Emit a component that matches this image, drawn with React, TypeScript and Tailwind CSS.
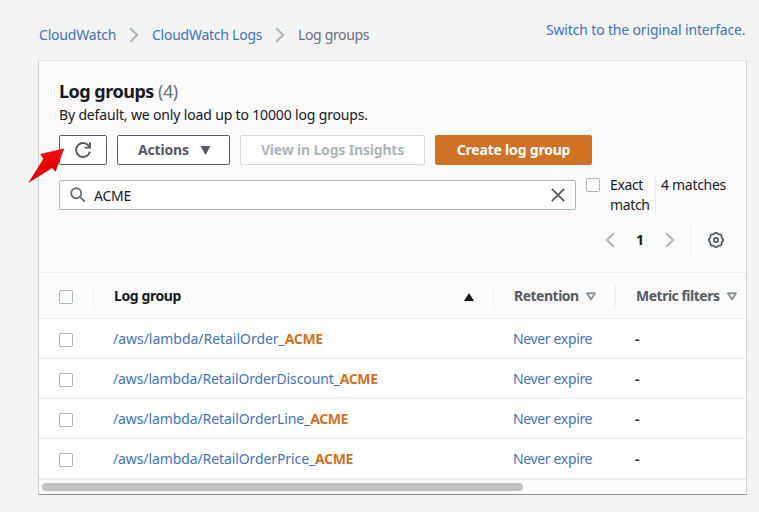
import React from "react";

const rows = [
  { name: "/aws/lambda/RetailOrder_", tracking: "tracking-[-0.03px]" },
  { name: "/aws/lambda/RetailOrderDiscount_", tracking: "tracking-[-0.12px]" },
  { name: "/aws/lambda/RetailOrderLine_", tracking: "tracking-[-0.1px]" },
  { name: "/aws/lambda/RetailOrderPrice_", tracking: "tracking-[-0.1px]" },
];

function Checkbox({ className = "" }: { className?: string }) {
  return <span className={"block h-[14px] w-[14px] shrink-0 rounded-[2px] border border-[#aab7b8] bg-white " + className} />;
}

function Chevron({ left = false }: { left?: boolean }) {
  return (
    <svg width="10" height="16" viewBox="0 0 10 16" fill="none" stroke="#aab7b8" strokeWidth="2" className="shrink-0">
      <path d={left ? "M8.7 1.2 1.9 8l6.8 6.8" : "M1.3 1.2 8.1 8l-6.8 6.8"} />
    </svg>
  );
}

function SortIcon() {
  return (
    <svg width="10" height="9" viewBox="0 0 10 9" fill="none" stroke="#879596" strokeWidth="1.9" strokeLinejoin="round" className="mt-px shrink-0">
      <path d="M1 1.2h8L5 7.6z" />
    </svg>
  );
}

// Scalloped outline with eight lobes, the first one at the top
const gearOutline = Array.from({ length: 96 }, (_, i) => {
  const angle = (i / 96) * Math.PI * 2;
  const radius = 6.75 + 0.5 * Math.cos(8 * angle);
  return `${(8 + radius * Math.sin(angle)).toFixed(2)},${(8 - radius * Math.cos(angle)).toFixed(2)}`;
}).join(" ");

export default function App() {
  return (
    <div className="h-[512px] w-[759px] overflow-hidden bg-[#f2f3f3] font-['Noto_Sans',sans-serif] text-[14px] leading-5 tracking-[-0.25px] whitespace-nowrap text-[#16191f]">
      <header className="flex h-[60px] pl-[39px] text-[#4174bd]">
        <nav className="mt-[25px] flex h-5 items-center">
          <a className="w-[90px] tracking-[-0.2px]">CloudWatch</a>
          <Chevron />
          <a className="ml-[13px] w-[123px]">CloudWatch Logs</a>
          <Chevron />
          <span className="ml-[13px] w-[80px] tracking-[-0.35px] text-[#687078]">Log groups</span>
        </nav>
        <a className="mt-5 ml-[168px] tracking-[-0.16px]">Switch to the original interface.</a>
      </header>

      <main className="flex ml-[38px] h-[435px] w-[709px] flex-col border border-t-[#e4e7e7] border-r-[#c9cfcf] border-b-[#8d9094] border-l-[#c9cfcf] bg-[#fafafa]">
        <section className="h-[211px] pl-5">
          <h1 className="mt-[18px] h-6 text-[18px] leading-6 font-bold tracking-[-0.5px]">
            Log groups <span className="font-normal text-[#687078]">(4)</span>
          </h1>
          <p className="mt-[2px] tracking-[-0.155px]">By default, we only load up to 10000 log groups.</p>
          <div className="mt-[10px] flex h-[30px] gap-[10px] font-bold tracking-[-0.17px] text-[#545b64]">
            <button className="flex w-12 items-center justify-center rounded-[2px] border border-[#545b64] bg-white">
              <svg width="18" height="18" viewBox="0 0 18 18" fill="none" stroke="#545b64" strokeWidth="1.9">
                <path d="M15.9 10.6A7 7 0 1 1 15.2 5.6" />
                <path d="M16 1.2v5.4h-5.3" />
              </svg>
            </button>
            <button className="flex w-[113px] items-center rounded-[2px] border border-[#545b64] bg-white pl-5">
              <span className="w-[62px] text-left">Actions</span>
              <svg width="11" height="9" viewBox="0 0 11 9" fill="#545b64"><path d="M.5 0h10L5.5 9z" /></svg>
            </button>
            <button className="w-[185px] rounded-[2px] border border-[#d5dbdb] bg-white text-[#aab7b8]">View in Logs Insights</button>
            <button className="w-[157px] rounded-[2px] bg-[#d17126] tracking-[-0.2px] text-white">Create log group</button>
          </div>
          <div className="mt-[10px] flex">
            <div className="mt-[5px] flex h-[30px] w-[517px] items-center rounded-[2px] border border-[#aab7b8] bg-white pl-[10px]">
              <svg width="16" height="16" viewBox="0 0 16 16" fill="none" stroke="#687078" strokeWidth="1.9">
                <circle cx="6.2" cy="6.2" r="5" />
                <path d="m9.8 9.8 5 4.8" />
              </svg>
              <span className="mt-[2px] ml-2 flex-1">ACME</span>
              <svg width="14" height="14" viewBox="0 0 14 14" fill="none" stroke="#545b64" strokeWidth="1.9" className="mr-[10px]">
                <path d="m.8.8 12.4 12.4M13.2.8.8 13.2" />
              </svg>
            </div>
            <div className="ml-[10px] flex h-10 w-[70px] border-r border-[#eaeded]">
              <Checkbox className="mt-[3px]" />
              <span className="ml-[10px] tracking-[-0.35px] whitespace-normal">Exact match</span>
            </div>
            <span className="ml-[5px] tracking-[-0.3px]">4 matches</span>
          </div>
          <div className="mt-[10px] flex h-[30px] items-center pl-[546px]">
            <Chevron left />
            <b className="ml-[21px] w-[29px]">1</b>
            <Chevron />
            <div className="ml-[15px] flex h-[30px] items-center border-l border-[#eaeded] pl-[17px]">
              <svg width="16" height="16" viewBox="0 0 16 16" fill="none" stroke="#545b64" strokeWidth="1.8">
                <polygon points={gearOutline} />
                <circle cx="8" cy="8" r="2.1" />
              </svg>
            </div>
          </div>
        </section>

        <div className="flex h-[47px] shrink-0 items-center border-y border-[#eaeded] pt-px pl-5 font-bold tracking-[-0.5px]">
          <Checkbox className="mt-[2px]" />
          <div className="ml-5 flex h-[23px] w-[400px] items-center border-l border-[#eaeded] pl-5">
            <span className="w-[350px] tracking-[-0.4px]">Log group</span>
            <svg width="10" height="8" viewBox="0 0 10 8" fill="#16191f" className="mt-px"><path d="M5 0 10 8H0z" /></svg>
          </div>
          <div className="flex h-[23px] w-[122px] items-center border-l border-[#eaeded] pl-5 text-[#545b64]">
            <span className="w-[72px]">Retention</span>
            <SortIcon />
          </div>
          <div className="flex h-[23px] items-center border-l border-[#eaeded] pl-5 text-[#545b64]">
            <span className="w-[91px]">Metric filters</span>
            <SortIcon />
          </div>
        </div>
        {rows.map((row) => (
          <div key={row.name} className="flex h-10 shrink-0 items-center border-b border-[#eaeded] bg-white pt-px pl-5 text-[#4174bd]">
            <Checkbox className="mt-[2px]" />
            <a className="ml-[40px] w-[400px]">
              <span className={row.tracking}>{row.name}</span>
              <b className="tracking-[-0.4px] text-[#d17126]">ACME</b>
            </a>
            <a className="w-[122px] tracking-[-0.35px]">Never expire</a>
            <span className="font-semibold text-[#16191f]">-</span>
          </div>
        ))}
        <div className="h-[15px] border-t border-[#eaeded] pt-[3px] pl-[3px]">
          <div className="h-2 w-[481px] rounded-full bg-[#c1c1c1]" />
        </div>
      </main>

      <svg className="absolute top-[147px] left-[28px]" width="38" height="38" viewBox="0 0 38 38">
        <defs>
          <linearGradient id="pointer" x1="0" y1="0" x2="0.6" y2="1">
            <stop offset="0.3" stopColor="#fa0a0a" />
            <stop offset="0.8" stopColor="#d90000" />
          </linearGradient>
        </defs>
        <path d="M35.8 1.8 12.7 7.2l2.8 4.8L1 35.3l23.2-14.5 3.2 3.7z" fill="url(#pointer)" stroke="#c40000" strokeWidth="0.5" strokeLinejoin="round" />
      </svg>
    </div>
  );
}
